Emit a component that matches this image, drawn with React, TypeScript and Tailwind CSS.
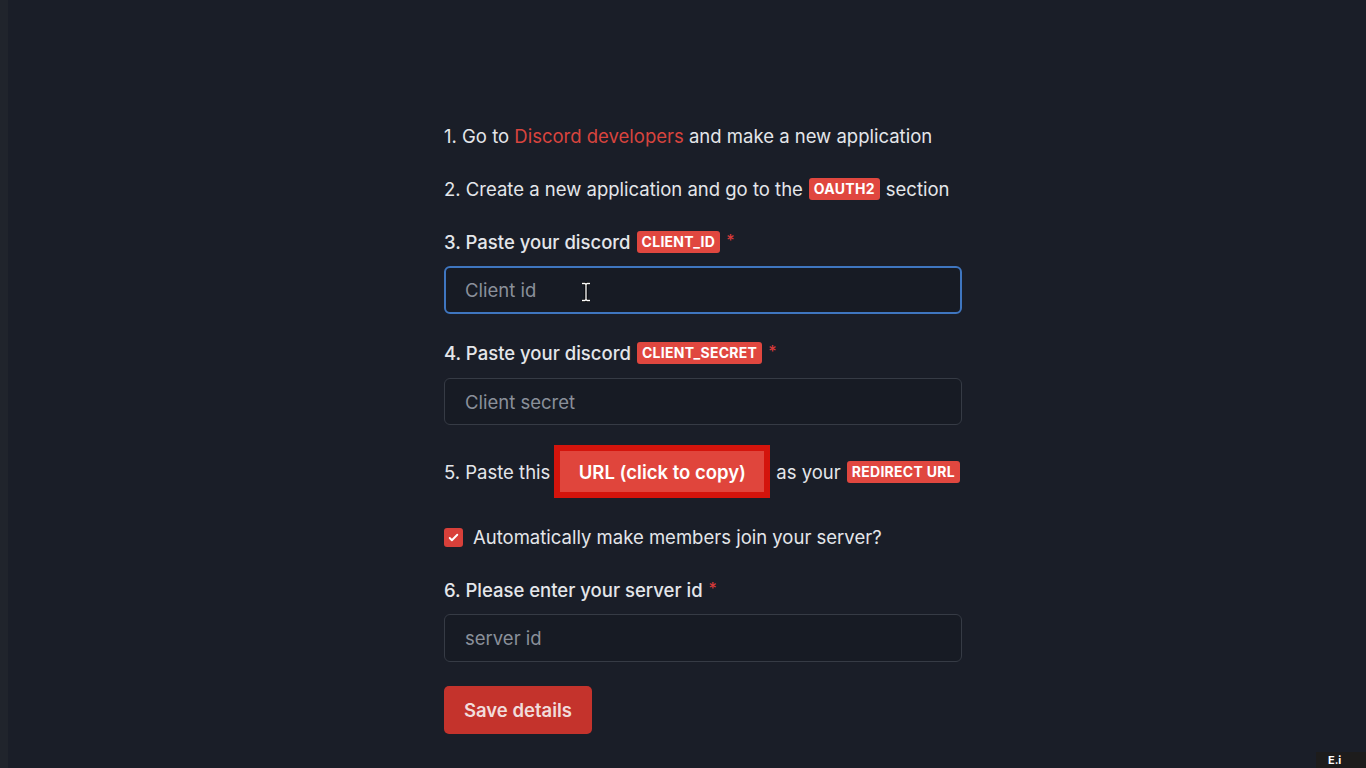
import React from 'react';

const Badge = ({ children }: { children: React.ReactNode }) => (
  <span className="inline-flex h-[22px] shrink-0 items-center whitespace-nowrap rounded-[3px] bg-[#e0473f] px-[5px] text-[14px] font-bold uppercase leading-none tracking-[0.02em] text-white">
    {children}
  </span>
);

const Star = () => <span className="-translate-y-[2px] text-[16px] text-[#d83a3a]">*</span>;

const Cursor = () => (
  <svg width="12" height="20" viewBox="0 0 12 20" className="absolute left-[134px] top-[14px]">
    <path d="M2 1.5h3l1 1 1-1h3M6 2.5v15M2 18.5h3l1-1 1 1h3" stroke="#000" strokeWidth="3" fill="none" />
    <path d="M2 1.5h3l1 1 1-1h3M6 2.5v15M2 18.5h3l1-1 1 1h3" stroke="#fff" strokeWidth="1.3" fill="none" />
  </svg>
);

export default function App() {
  return (
    <div
      className="relative flex h-[768px] w-full overflow-hidden bg-[#1a1e28] text-[18.5px] leading-7 text-[#e4e6ea]"
      style={{ fontFamily: 'Inter, "Noto Sans", sans-serif' }}
    >
      <div className="w-[8px] shrink-0 bg-[#20242c]" />
      <div className="flex flex-1 justify-center pl-[32px]">
        <div className="w-[518px] pt-[122px]">
          <p>
            1. Go to <span className="text-[#d8443e]">Discord developers</span> and make a new application
          </p>
          <p className="mt-[25px] flex items-center gap-[6px] whitespace-nowrap">
            <span>2. Create a new application and go to the</span>
            <Badge>oauth2</Badge>
            <span>section</span>
          </p>
          <p className="mt-[25px] flex items-center gap-[6px] font-medium">
            <span>3. Paste your discord</span>
            <Badge>client_id</Badge>
            <Star />
          </p>
          <div className="relative mt-[10px] flex h-[48px] items-center rounded-[6px] border-2 border-[#3f76c0] bg-[#171b24] px-[19px] text-[#8a909a]">
            Client id
            <Cursor />
          </div>
          <p className="mt-[25px] flex items-center gap-[6px] font-medium">
            <span>4. Paste your discord</span>
            <Badge>client_secret</Badge>
            <Star />
          </p>
          <div className="mt-[11px] flex h-[47px] items-center rounded-[6px] border border-[#363b45] bg-[#171b24] px-[20px] text-[#8a909a]">
            Client secret
          </div>
          <div className="mt-[20px] flex h-[53px] items-center whitespace-nowrap">
            <span className="shrink-0">5. Paste this</span>
            <div className="ml-[4px] mr-[6px] shrink-0 border-[6px] border-[#d4140c]">
              <button className="flex h-[41px] w-[204px] items-center justify-center bg-[#e0453c] font-semibold text-white">
                URL (click to copy)
              </button>
            </div>
            <span className="mr-[6px] shrink-0">as your</span>
            <Badge>redirect url</Badge>
          </div>
          <label className="mt-[25px] flex items-center gap-[10px]">
            <span className="flex h-[19px] w-[19px] items-center justify-center rounded-[3px] bg-[#d8403a]">
              <svg width="13" height="13" viewBox="0 0 24 24" fill="none" stroke="#fff" strokeWidth="3.5" strokeLinecap="round" strokeLinejoin="round">
                <path d="M5 13l4 4L19 7" />
              </svg>
            </span>
            <span>Automatically make members join your server?</span>
          </label>
          <p className="mt-[25px] flex items-center gap-[6px] font-medium">
            <span>6. Please enter your server id</span>
            <Star />
          </p>
          <div className="mt-[10px] flex h-[48px] items-center rounded-[6px] border border-[#363b45] bg-[#171b24] px-[20px] text-[#8a909a]">
            server id
          </div>
          <button className="mt-[24px] flex h-[48px] w-[148px] items-center justify-center rounded-[5px] bg-[#c4332c] font-semibold text-[#f1dcdb]">
            Save details
          </button>
        </div>
      </div>
      <div className="absolute bottom-0 right-0 flex h-[16px] w-[50px] items-center overflow-hidden bg-[#1d1c1c] pl-[12px]">
        <span className="text-[11px] font-bold leading-[14px] text-white">E.i</span>
      </div>
    </div>
  );
}
